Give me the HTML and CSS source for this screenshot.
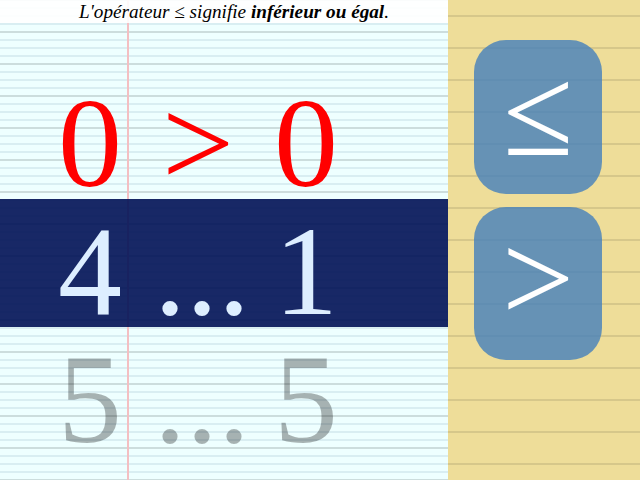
FILE: index.html
```
<!DOCTYPE html>
<html lang="fr">
<head>
<meta charset="utf-8">
<meta name="viewport" content="width=device-width, initial-scale=1">
<title>Comparer des nombres</title>
<link rel="stylesheet" href="styles.css">
</head>
<body>
<main class="sheet">
  <p class="hint">L'opérateur ≤ signifie <strong>inférieur ou égal</strong>.</p>
  <div class="rows">
    <div class="row wrong"><span>0</span><span>&gt;</span><span>0</span></div>
    <div class="row current"><span>4</span><span class="blank">...</span><span>1</span></div>
    <div class="row next"><span>5</span><span class="blank">...</span><span>5</span></div>
  </div>
</main>
<aside class="answers">
  <button type="button" class="answer">≤</button>
  <button type="button" class="answer">&gt;</button>
</aside>
</body>
</html>
```
FILE: styles.css
```
* {
  box-sizing: border-box;
}

body {
  margin: 0;
  min-height: 100vh;
  display: grid;
  grid-template-columns: 7fr 3fr;
  overflow: hidden;
  font-family: "Liberation Serif", serif;
}

.sheet {
  background-color: #eeffff;
  background-image:
    linear-gradient(to right, #f4bfc2, #f4bfc2),
    repeating-linear-gradient(to bottom, #ccdddd 0 2px, transparent 2px 32px),
    repeating-linear-gradient(to bottom, #d9eef2 0 2px, transparent 2px 8px);
  background-size: 2px 100%, 100% 512px, 100% 512px;
  background-position: 127px 0, 0 -1px, 0 -1px;
  background-repeat: no-repeat, repeat-y, repeat-y;
}

.hint {
  margin: 0;
  padding-left: 20px;
  background: rgba(255, 255, 255, 0.9);
  font-size: 3vw;
  font-style: italic;
  line-height: 23px;
  text-align: center;
}

.rows {
  margin-top: 48px;
}

.row {
  display: grid;
  grid-template-columns: repeat(3, 1fr);
  padding: 8px 88px 0 36px;
  font-size: 128px;
  line-height: 128px;
  height: 128px;
  text-align: center;
}

.blank {
  padding-left: 8px;
}

.wrong {
  color: #ff0000;
}

.current {
  background: rgba(0, 17, 85, 0.9);
  color: #ddeeff;
}

.next {
  color: rgba(0, 0, 0, 0.3);
}

.answers {
  display: flex;
  flex-direction: column;
  align-items: center;
  gap: 13px;
  padding: 40px 12px 0 0;
  background-color: #eedd99;
  background-image: repeating-linear-gradient(to bottom, #d6c78a 0 2px, transparent 2px 32px);
  background-size: 100% 512px;
  background-position: 0 15px;
}

.answer {
  width: 20vw;
  height: 32vh;
  padding: 0 0 10px;
  border: 0;
  border-radius: 32px;
  background: rgba(68, 128, 187, 0.8);
  color: #ffffff;
  font-family: inherit;
  font-size: 128px;
  line-height: 1;
  cursor: pointer;
}
```
